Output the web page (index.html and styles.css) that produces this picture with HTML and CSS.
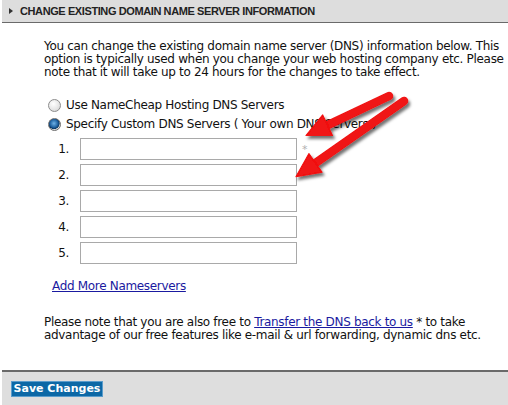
FILE: index.html
```html
<!DOCTYPE html>
<html>
<head>
<meta charset="utf-8">
<link rel="stylesheet" href="styles.css">
</head>
<body>
<div class="panel">
  <div class="head"><span class="tri"></span>CHANGE EXISTING DOMAIN NAME SERVER INFORMATION</div>
  <div class="content">
    <p class="intro">You can change the existing domain name server (DNS) information below. This option is typically used when you change your web hosting company etc. Please note that it will take up to 24 hours for the changes to take effect.</p>
    <div class="options">
      <label class="opt"><input type="radio" name="dns" class="radio"><span>Use NameCheap Hosting DNS Servers</span></label>
      <label class="opt"><input type="radio" name="dns" class="radio" checked><span>Specify Custom DNS Servers ( Your own DNS Servers )</span></label>
    </div>
    <div class="ns-list">
      <div class="ns-row"><span class="num">1.</span><input class="ns" type="text"><span class="req">*</span></div>
      <div class="ns-row"><span class="num">2.</span><input class="ns" type="text"></div>
      <div class="ns-row"><span class="num">3.</span><input class="ns" type="text"></div>
      <div class="ns-row"><span class="num">4.</span><input class="ns" type="text"></div>
      <div class="ns-row"><span class="num">5.</span><input class="ns" type="text"></div>
    </div>
    <div class="more-wrap"><a class="more" href="#">Add More Nameservers</a></div>
    <p class="note">Please note that you are also free to <a href="#" class="lnk">Transfer the DNS back to us</a> * to take advantage of our free features like e-mail &amp; url forwarding, dynamic dns etc.</p>
  </div>
  <div class="foot"><button class="save" type="button">Save Changes</button></div>
  <svg class="arrows" width="508" height="405" viewBox="0 0 508 405">
    <defs>
      <filter id="sh" x="-20%" y="-20%" width="140%" height="140%">
        <feDropShadow dx="2" dy="3" stdDeviation="1.6" flood-color="#000" flood-opacity="0.55"/>
      </filter>
    </defs>
    <g filter="url(#sh)" fill="#f01212" stroke="#f01212">
      <g transform="translate(389 96) rotate(154.6)">
        <line x1="0" y1="0" x2="72" y2="0" stroke-width="8.5" stroke-linecap="round"/>
        <polygon points="68,-11.5 92,0 68,11.5" stroke-width="1" stroke-linejoin="round"/>
      </g>
      <g transform="translate(404 101) rotate(145)">
        <line x1="0" y1="0" x2="112" y2="0" stroke-width="8.5" stroke-linecap="round"/>
        <polygon points="108,-11.5 132,0 108,11.5" stroke-width="1" stroke-linejoin="round"/>
      </g>
    </g>
  </svg>
</div>
</body>
</html>
```

FILE: styles.css
```css
html, body {
  margin: 0;
  padding: 0;
  background: #fff;
}
.panel {
  position: relative;
  width: 506px;
  height: 405px;
  margin-left: 2px;
  font-family: "DejaVu Sans", Verdana, sans-serif;
  font-size: 12px;
  letter-spacing: -0.32px;
  line-height: 13px;
  color: #111;
  display: flex;
  flex-direction: column;
}
.head {
  height: 22px;
  background: #dddddd;
  border-bottom: 1px solid #6a6a6a;
  font-family: "Liberation Sans", Arial, sans-serif;
  font-weight: bold;
  font-size: 11px;
  letter-spacing: -0.4px;
  line-height: 22px;
  color: #222;
  display: flex;
  align-items: center;
  padding-left: 7px;
}
.tri {
  width: 0;
  height: 0;
  border-top: 3px solid transparent;
  border-bottom: 3px solid transparent;
  border-left: 4px solid #333;
  margin-right: 7px;
}
.content {
  flex: 1;
  padding-left: 42px;
}
.intro {
  margin: 17px 0 0 0;
  width: 464px;
}
.options {
  margin-top: 17px;
  display: flex;
  flex-direction: column;
}
.opt {
  height: 19px;
  display: flex;
  align-items: center;
}
.radio {
  appearance: none;
  -webkit-appearance: none;
  width: 13px;
  height: 13px;
  margin: 0 5px 0 4px;
  border-radius: 50%;
  border: 1px solid #8c8c8c;
  background: radial-gradient(circle at 40% 35%, #ffffff 0%, #e4e4e4 60%, #c8c8c8 100%);
  box-sizing: border-box;
}
.radio:checked {
  background: radial-gradient(circle at 45% 40%, #6fb3e8 0%, #1d5f9e 45%, #0c3a66 60%, #d9d9d9 66%, #c4c4c4 100%);
  border-color: #6d6d6d;
}
.ns-list {
  margin-top: 4px;
  display: flex;
  flex-direction: column;
  gap: 4px;
}
.ns-row {
  display: flex;
  align-items: center;
  height: 22px;
}
.num {
  width: 25px;
  text-align: right;
  margin-right: 11px;
}
.ns {
  width: 217px;
  height: 22px;
  box-sizing: border-box;
  border: 1px solid #a9a9a9;
  margin: 0;
  padding: 0 3px;
  background: #fff;
}
.req {
  color: #b0b0b0;
  margin-left: 5px;
  font-size: 11px;
}
.more-wrap {
  margin-top: 16px;
  padding-left: 8px;
}
.more, .lnk {
  color: #1a1aa0;
  text-decoration: underline;
}
.note {
  margin: 23px 0 0 0;
  width: 464px;
}
.foot {
  border-top: 2px solid #6a6a6a;
  background: #dedede;
  padding: 9px 0 0 9px;
  box-sizing: border-box;
  height: 35px;
}
.save {
  background: #0c68a6;
  color: #fff;
  border: 1px solid #5a9ccc;
  font-family: "DejaVu Sans", Verdana, sans-serif;
  font-weight: bold;
  font-size: 11px;
  letter-spacing: 0;
  line-height: 14px;
  height: 16px;
  width: 92px;
  padding: 0;
  margin: 0;
  display: block;
}
.arrows {
  position: absolute;
  left: -2px;
  top: 0;
  pointer-events: none;
}
```
